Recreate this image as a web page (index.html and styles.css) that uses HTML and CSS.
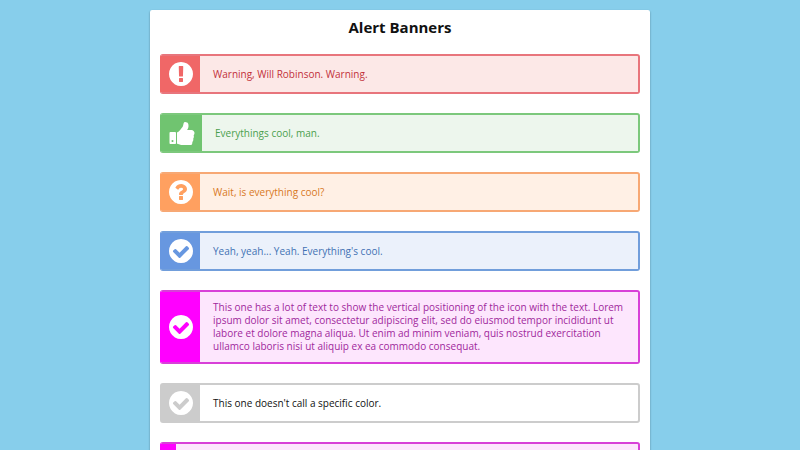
FILE: index.html
```html
<!DOCTYPE html>
<html lang="en">
<head>
  <meta charset="UTF-8">
  <meta name="viewport" content="width=device-width, initial-scale=1.0">
  <title>Alert Banners</title>
  <link rel="stylesheet" href="styles.css">
</head>
<body>
  <svg class="sprite" aria-hidden="true">
    <symbol id="icon-warning" viewBox="128 128 1536 1536">
      <path d="M896 128q209 0 385.5 103t279.5 279.5 103 385.5-103 385.5-279.5 279.5-385.5 103-385.5-103-279.5-279.5-103-385.5 103-385.5 279.5-279.5 385.5-103zm128 1247v-190q0-14-9-23.5t-22-9.5h-192q-13 0-23 10t-10 23v190q0 13 10 23t23 10h192q13 0 22-9.5t9-23.5zm-2-344l18-621q0-12-10-18-10-8-24-8h-220q-14 0-24 8-10 6-10 18l17 621q0 10 10 17.5t24 7.5h185q14 0 23.5-7.5t10.5-17.5z"/>
    </symbol>
    <symbol id="icon-thumb" viewBox="64 64 1600 1536">
      <path d="M320 1344q0-26-19-45t-45-19q-27 0-45.5 19t-18.5 45q0 27 18.5 45.5t45.5 18.5q26 0 45-18.5t19-45.5zm160-512v640q0 26-19 45t-45 19h-288q-26 0-45-19t-19-45v-640q0-26 19-45t45-19h288q26 0 45 19t19 45zm1184 0q0 86-55 149 15 44 15 76 3 76-43 137 17 56 0 117-15 57-54 94 9 112-49 181-64 76-197 78h-129q-66 0-144-15.5t-121.5-29-120.5-39.5q-123-43-158-44-26-1-45-19.5t-19-44.5v-641q0-25 18-43.5t43-20.5q24-2 76-59t101-121q68-87 101-120 18-18 31-48t17.5-48.5 13.5-60.5q7-39 12.5-61t19.5-52 34-50q19-19 45-19 46 0 82.5 10.5t60 26 40 40.5 24 45 12 50 5 45 .5 39q0 38-9.5 76t-19 60-27.5 56q-3 6-10 18t-11 22-8 24h277q78 0 135 57t57 135z"/>
    </symbol>
    <symbol id="icon-question" viewBox="128 128 1536 1536">
      <path d="M1024 1376v-192q0-14-9-23t-23-9h-192q-14 0-23 9t-9 23v192q0 14 9 23t23 9h192q14 0 23-9t9-23zm256-672q0-88-55.5-163t-138.5-116-170-41q-243 0-371 213-15 24 8 42l132 100q7 6 19 6 16 0 25-12 53-68 86-92 34-24 86-24 48 0 85.5 26t37.5 59q0 38-20 61t-68 45q-63 28-115.5 86.5t-52.5 125.5v36q0 14 9 23t23 9h192q14 0 23-9t9-23q0-19 21.5-49.5t54.5-49.5q32-18 49-28.5t46-35 44.5-48 28-60.5 12.5-81zm384 192q0 209-103 385.5t-279.5 279.5-385.5 103-385.5-103-279.5-279.5-103-385.5 103-385.5 279.5-279.5 385.5-103 385.5 103 279.5 279.5 103 385.5z"/>
    </symbol>
    <symbol id="icon-check" viewBox="128 128 1536 1536">
      <path d="M1412 734q0-28-18-46l-91-90q-19-19-45-19t-45 19l-408 407-226-226q-19-19-45-19t-45 19l-91 90q-18 18-18 46 0 27 18 45l362 362q19 19 45 19 27 0 46-19l543-543q18-18 18-45zm252 162q0 209-103 385.5t-279.5 279.5-385.5 103-385.5-103-279.5-279.5-103-385.5 103-385.5 279.5-279.5 385.5-103 385.5 103 279.5 279.5 103 385.5z"/>
    </symbol>
  </svg>

  <main class="container">
    <h1>Alert Banners</h1>

    <div class="alert red">
      <div class="alert-icon"><svg class="icon"><use href="#icon-warning"/></svg></div>
      <p class="alert-text">Warning, Will Robinson. Warning.</p>
    </div>

    <div class="alert green">
      <div class="alert-icon"><svg class="icon icon-wide"><use href="#icon-thumb"/></svg></div>
      <p class="alert-text">Everythings cool, man.</p>
    </div>

    <div class="alert orange">
      <div class="alert-icon"><svg class="icon"><use href="#icon-question"/></svg></div>
      <p class="alert-text">Wait, is everything cool?</p>
    </div>

    <div class="alert blue">
      <div class="alert-icon"><svg class="icon"><use href="#icon-check"/></svg></div>
      <p class="alert-text">Yeah, yeah... Yeah. Everything's cool.</p>
    </div>

    <div class="alert magenta">
      <div class="alert-icon"><svg class="icon"><use href="#icon-check"/></svg></div>
      <p class="alert-text">This one has a lot of text to show the vertical positioning of the icon with the text. Lorem ipsum dolor sit amet, consectetur adipiscing elit, sed do eiusmod tempor incididunt ut labore et dolore magna aliqua. Ut enim ad minim veniam, quis nostrud exercitation ullamco laboris nisi ut aliquip ex ea commodo consequat.</p>
    </div>

    <div class="alert">
      <div class="alert-icon"><svg class="icon"><use href="#icon-check"/></svg></div>
      <p class="alert-text">This one doesn't call a specific color.</p>
    </div>

    <div class="alert magenta">
      <div class="alert-icon"></div>
      <p class="alert-text">This one doesn't have an icon.</p>
    </div>
  </main>
</body>
</html>
```
FILE: styles.css
```css
* { box-sizing: border-box; }
body { margin: 0; padding: 10px; background-color: #87ceeb; font-family: "Open Sans", sans-serif; font-size: 10px; line-height: 13px; color: #111; }
.sprite { display: none; }

.container { max-width: 500px; margin: 0 auto; padding: 7px 10px 10px; background-color: #fff; border-radius: 2px; box-shadow: 0 1px 2px rgba(0, 0, 0, 0.4); }
h1 { margin: 0 0 17px; font-size: 15px; line-height: 20px; text-align: center; }

.alert { --main: #ccc; --line: #ccc; --tint: #fff; --text: #111; display: flex; min-height: 40px; margin-bottom: 19px; border: 2px solid var(--line); border-left-color: var(--main); border-radius: 3px; background-color: var(--tint); color: var(--text); }
.alert-icon { display: flex; align-items: center; flex-shrink: 0; padding: 0 7px; background-color: var(--main); }
.alert-text { align-self: center; margin: 0; padding: 9px 13px; }
.icon { display: block; width: 24px; height: 24px; fill: #fff; }
.icon-wide { width: 26px; }

.red { --main: #f06767; --line: #e8757c; --tint: #fce8e7; --text: #c2303a; }
.green { --main: #70c470; --line: #7cc87c; --tint: #edf6ed; --text: #4b9f4d; }
.orange { --main: #ffa060; --line: #f7a874; --tint: #fff0e5; --text: #d87824; }
.blue { --main: #6797e0; --line: #719edb; --tint: #ebf1fb; --text: #4272b4; }
.magenta { --main: #f0f; --line: #d840d8; --tint: #fde6fd; --text: #a0289c; }
```
